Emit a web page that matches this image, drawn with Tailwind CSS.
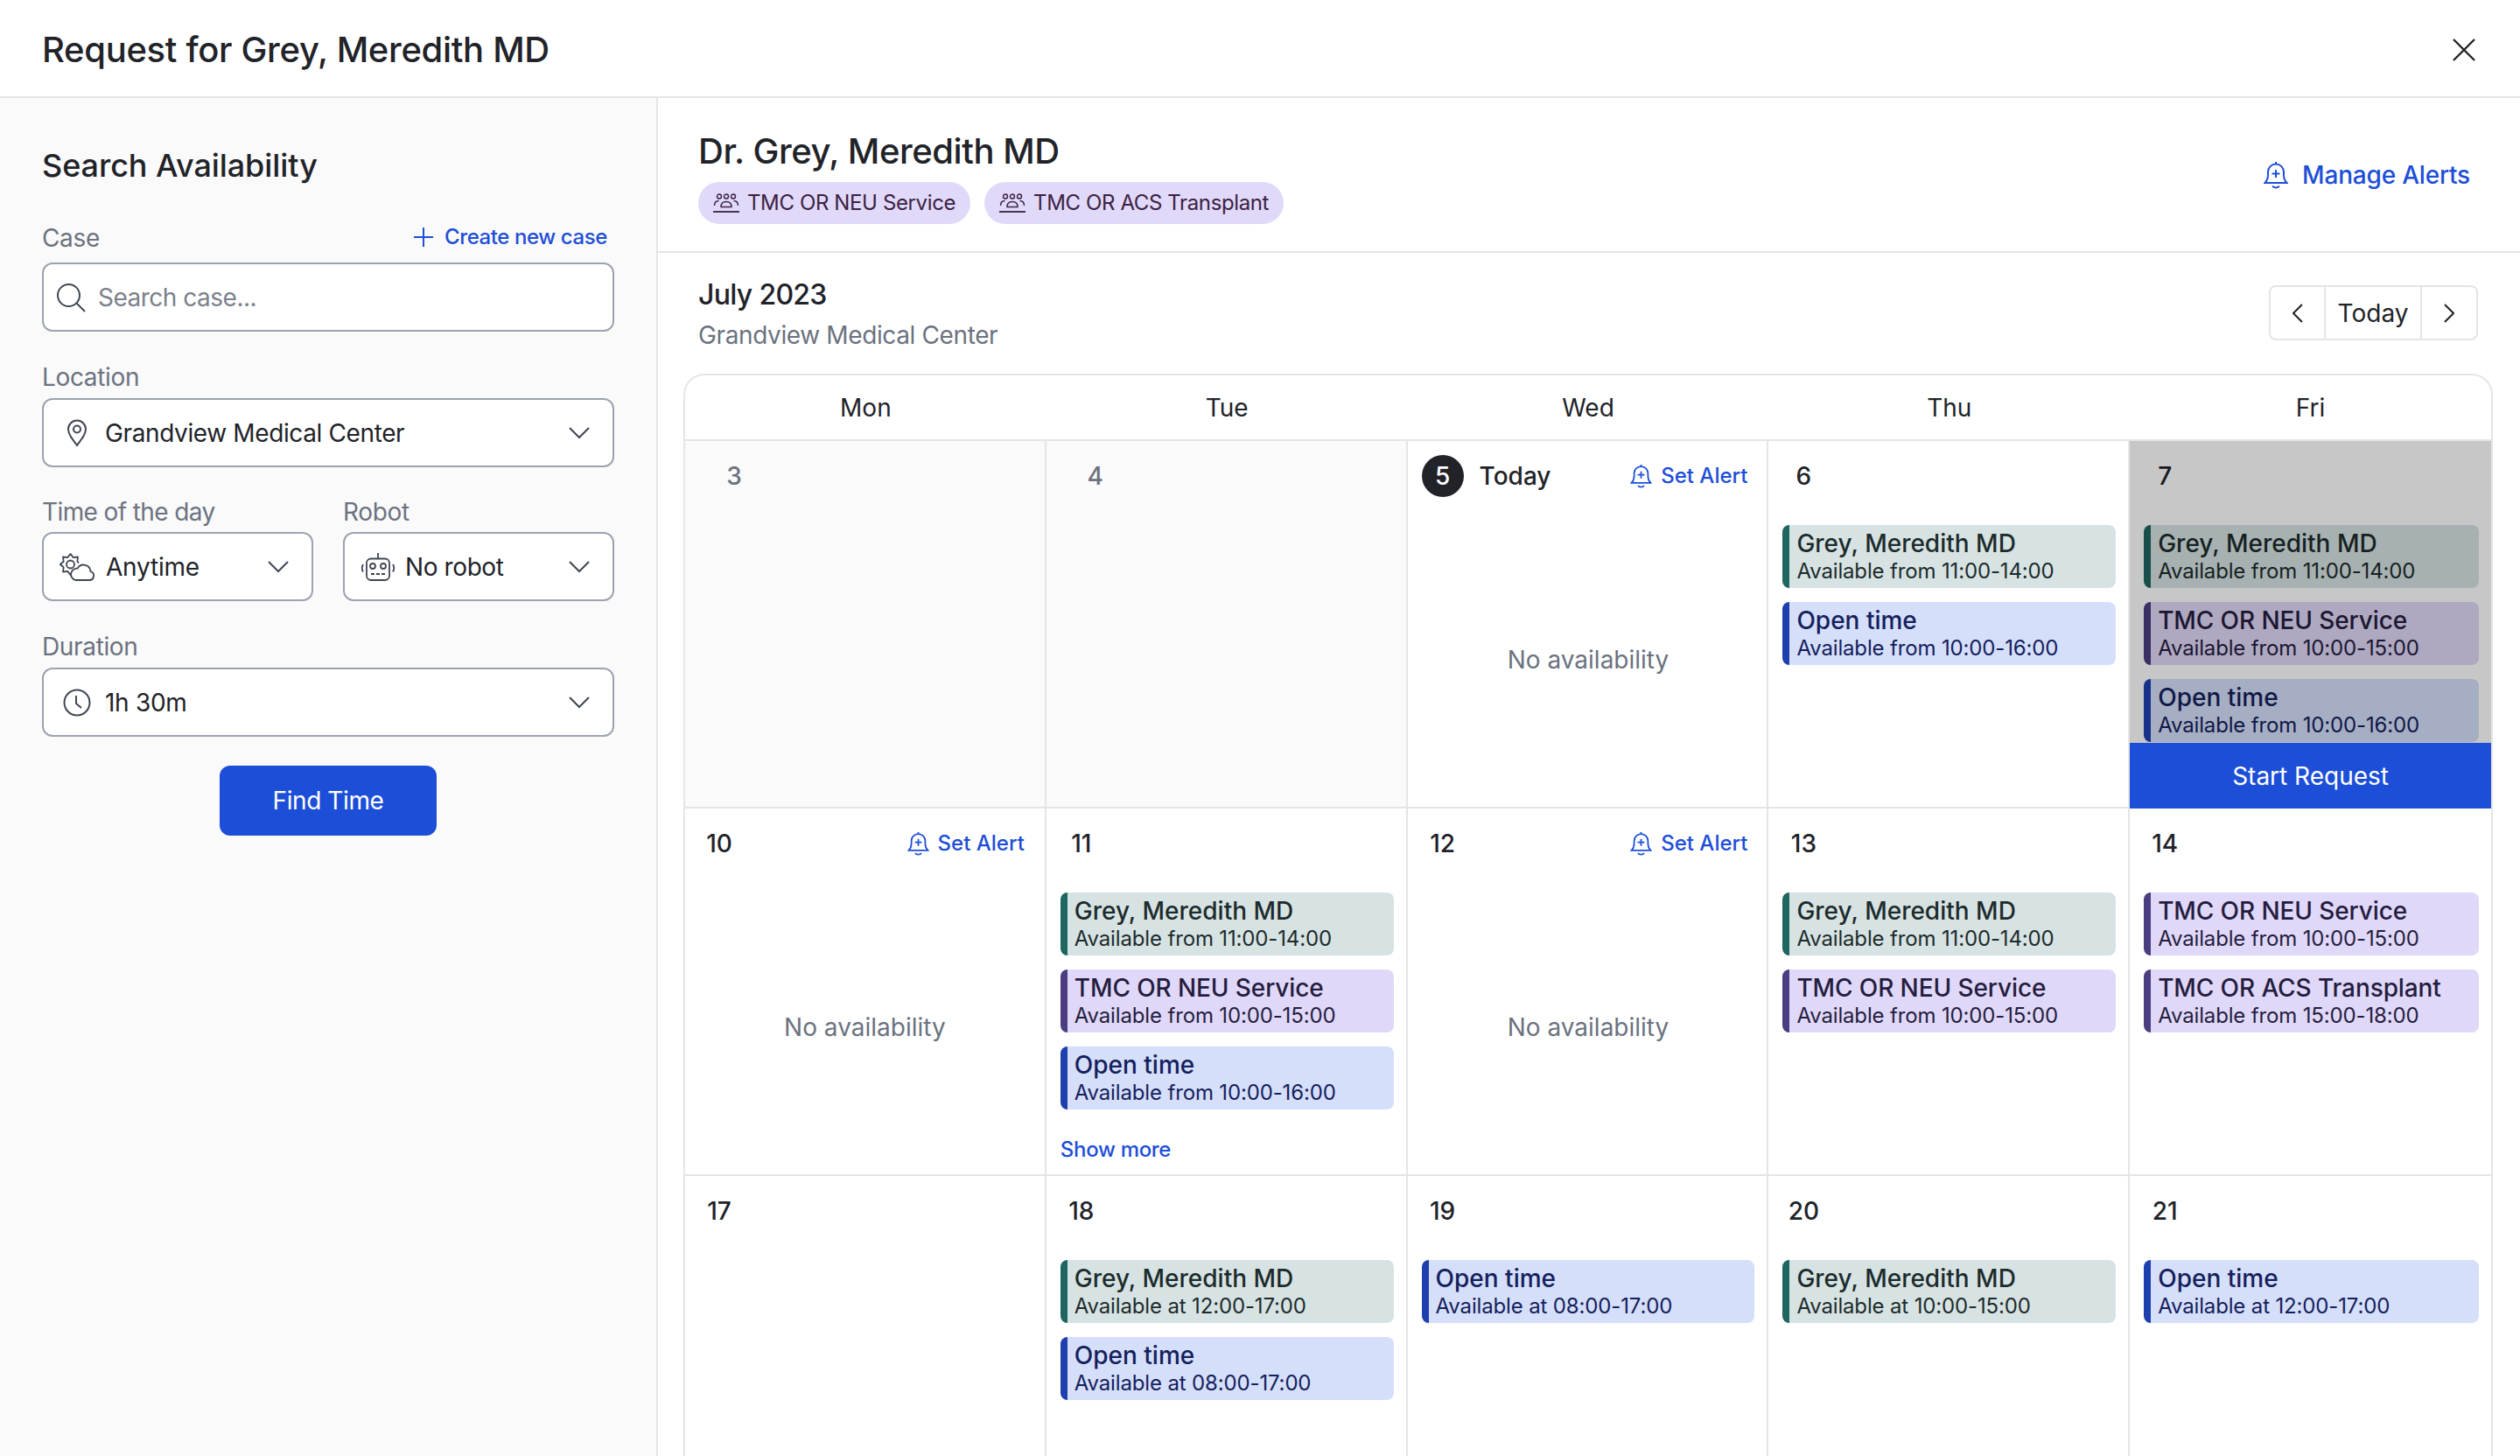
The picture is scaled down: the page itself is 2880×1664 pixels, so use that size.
<!DOCTYPE html>
<html lang="en">
<head>
    <meta charset="UTF-8">
    <title>Request for Grey, Meredith MD</title>
    <script src="https://cdn.jsdelivr.net/npm/@tailwindcss/browser@4"></script>
</head>
<body class="w-[2880px] h-[1664px] overflow-hidden bg-white text-[#212329] font-['Inter',sans-serif]">
    <header class="h-[112px] pt-[3px] border-b-2 border-[#e5e5e5] flex items-center justify-between pl-12 pr-[50px]">
        <h1 class="text-[40px] leading-[50px] font-[550] tracking-[-0.32px]">Request for Grey, Meredith MD</h1>
        <svg class="w-[28px] h-[28px] text-[#212329]" viewBox="0 0 28 28" fill="none" stroke="currentColor" stroke-width="2.4"><path d="M2 2l24 24M26 2L2 26"/></svg>
    </header>
    <div class="flex h-[1552px]">
        <!-- search form -->
        <aside class="w-[752px] shrink-0 bg-[#fafafa] border-r-2 border-[#e5e5e5] pl-12 pr-12 pt-[55px]">
            <h2 class="text-[36px] leading-[44px] font-[550] tracking-[-0.07px]">Search Availability</h2>
            <div class="flex items-center justify-between mt-[43px] mb-[10px] h-9 pr-2">
                <label class="text-[28px] text-[#6b7280] tracking-[-0.35px]">Case</label>
                <a class="flex items-center gap-[12px] mb-[3px] text-[24px] font-medium text-[#1d4ed8] tracking-[-0.4px]">
                    <svg class="w-[24px] h-[24px]" viewBox="0 0 24 24" fill="none" stroke="currentColor" stroke-width="2"><path d="M12 1v22M1 12h22"/></svg>
                    Create new case
                </a>
            </div>
            <div class="h-[79px] rounded-xl border-2 border-[#9ca3af] bg-white flex items-center pl-[14px] text-[28px] text-[#7b818c] tracking-[-0.5px]">
                <svg class="w-[34px] h-[34px] mr-[14px] text-[#3f4654]" viewBox="0 0 34 34" fill="none" stroke="currentColor" stroke-width="2"><circle cx="14.5" cy="14.5" r="12.5"/><path d="M23.5 23.5L33 33"/></svg>
                Search case...
            </div>

            <label class="block text-[28px] text-[#6b7280] tracking-[-0.35px] h-9 mt-[31px] mb-[9px]">Location</label>
            <div class="h-[79px] rounded-xl border-2 border-[#9ca3af] bg-white flex items-center pl-[26px] pr-[26px] text-[28px] tracking-[-0.38px]">
                <svg class="w-[24px] h-[32px] mr-[20px] text-[#3f4654]" viewBox="0 0 24 32" fill="none" stroke="currentColor" stroke-width="2"><path d="M12 30C6 22 2 17 2 11.500a10 10 0 0 1 20 0C22 17 18 22 12 30z"/><circle cx="12" cy="11.500" r="4"/></svg>
                <span class="flex-1">Grandview Medical Center</span>
                <svg class="w-[24px] h-[14px] text-[#3f4654]" viewBox="0 0 24 14" fill="none" stroke="currentColor" stroke-width="2"><path d="M1 1l11 11L23 1"/></svg>
            </div>

            <div class="grid grid-cols-2 gap-x-[34px] mt-[30px]">
                <div>
                    <label class="block text-[28px] text-[#6b7280] tracking-[-0.6px] h-9 mb-[8px]">Time of the day</label>
                    <div class="h-[79px] rounded-xl border-2 border-[#9ca3af] bg-white flex items-center pl-[18px] pr-[26px] text-[28px] tracking-[-0.2px]">
                        <svg class="w-[40px] h-[32px] mr-[13px] text-[#3f4654]" viewBox="0 0 40 32" fill="none" stroke="currentColor" stroke-width="1.800" stroke-linejoin="round"><path d="M15 21l-2.500 4-3.250-4.150L4 21.500l.65-5.250L.8 13l3.850-3.250L4 4.500l5.250.65L12.500 1l3.250 4.150L21 4.500l-.65 5.250L22 11.500"/><circle cx="12.500" cy="13" r="4.500"/><path fill="white" d="M18 31h16a5 5 0 0 0 1.500-9.800a8 8 0 0 0-15-3.500a6.800 6.800 0 0 0-2.500 13.300z"/></svg>
                        <span class="flex-1">Anytime</span>
                        <svg class="w-[24px] h-[14px] text-[#3f4654]" viewBox="0 0 24 14" fill="none" stroke="currentColor" stroke-width="2"><path d="M1 1l11 11L23 1"/></svg>
                    </div>
                </div>
                <div>
                    <label class="block text-[28px] text-[#6b7280] tracking-[-0.35px] h-9 mb-[8px]">Robot</label>
                    <div class="h-[79px] rounded-xl border-2 border-[#9ca3af] bg-white flex items-center pl-[18px] pr-[26px] text-[28px] tracking-[-0.4px]">
                        <svg class="w-[40px] h-[32px] mr-[11px] text-[#3f4654]" viewBox="0 0 40 32" fill="none" stroke="currentColor" stroke-width="1.800"><path d="M20 0v6"/><rect x="7" y="6.500" width="26" height="24.500" rx="5"/><circle cx="14" cy="15" r="3"/><circle cx="26" cy="15" r="3"/><path d="M12 24h4M18 24h4M24 24h4" stroke-width="2"/><path d="M3 13c-1.500 2.500-1.500 6 0 8.500M37 13c1.500 2.500 1.500 6 0 8.500"/></svg>
                        <span class="flex-1">No robot</span>
                        <svg class="w-[24px] h-[14px] text-[#3f4654]" viewBox="0 0 24 14" fill="none" stroke="currentColor" stroke-width="2"><path d="M1 1l11 11L23 1"/></svg>
                    </div>
                </div>
            </div>

            <label class="block text-[28px] text-[#6b7280] tracking-[-0.35px] h-9 mt-[31px] mb-[9px]">Duration</label>
            <div class="h-[79px] rounded-xl border-2 border-[#9ca3af] bg-white flex items-center pl-[22px] pr-[26px] text-[28px] tracking-[-0.3px]">
                <svg class="w-[32px] h-[32px] mr-[16px] text-[#3f4654]" viewBox="0 0 32 32" fill="none" stroke="currentColor" stroke-width="2"><circle cx="16" cy="16" r="14.500"/><path d="M15 8v9l6 5"/></svg>
                <span class="flex-1">1h 30m</span>
                <svg class="w-[24px] h-[14px] text-[#3f4654]" viewBox="0 0 24 14" fill="none" stroke="currentColor" stroke-width="2"><path d="M1 1l11 11L23 1"/></svg>
            </div>

            <div class="flex justify-center mt-[33px]">
                <button class="w-[248px] h-[80px] rounded-xl bg-[#1d4ed8] text-white text-[28px] tracking-[-0.4px]">Find Time</button>
            </div>
        </aside>

        <main class="flex-1 min-w-0 overflow-hidden">
            <div class="h-[177px] border-b-2 border-[#e5e5e5] flex items-start justify-between pl-[46px] pr-[57px]">
                <div class="pt-[36px]">
                    <h2 class="text-[40px] leading-[50px] font-[550] tracking-[-0.44px]">Dr. Grey, Meredith MD</h2>
                    <div class="flex gap-[16px] mt-[10px]">
                        <span class="h-[48px] rounded-full bg-[#e0d9f9] text-[#3b2142] text-[24px] tracking-[-0.38px] flex items-center pl-[17px] pr-[17px] gap-[9px]">
                            <svg class="w-[30px] h-[22px]" viewBox="0 0 30 22" fill="none" stroke="currentColor" stroke-width="1.400"><circle cx="7" cy="3.500" r="2.500"/><circle cx="15" cy="3.500" r="2.500"/><circle cx="23" cy="3.500" r="2.500"/><path d="M1.500 14c0-4 2-5.500 5-5.500M28.500 14c0-4-2-5.500-5-5.500"/><path d="M9 15.500c0-4 2-6 6-6s6 2 6 6z"/><path d="M0 21h30" stroke-width="1.800"/></svg>
                            TMC OR NEU Service
                        </span>
                        <span class="h-[48px] rounded-full bg-[#e0d9f9] text-[#3b2142] text-[24px] tracking-[-0.38px] flex items-center pl-[17px] pr-[17px] gap-[9px]">
                            <svg class="w-[30px] h-[22px]" viewBox="0 0 30 22" fill="none" stroke="currentColor" stroke-width="1.400"><circle cx="7" cy="3.500" r="2.500"/><circle cx="15" cy="3.500" r="2.500"/><circle cx="23" cy="3.500" r="2.500"/><path d="M1.500 14c0-4 2-5.500 5-5.500M28.500 14c0-4-2-5.500-5-5.500"/><path d="M9 15.500c0-4 2-6 6-6s6 2 6 6z"/><path d="M0 21h30" stroke-width="1.800"/></svg>
                            TMC OR ACS Transplant
                        </span>
                    </div>
                </div>
                <a class="flex items-center gap-[16px] mt-[70px] text-[28px] leading-9 font-medium text-[#1d4ed8] tracking-[-0.2px]">
                    <svg class="w-[28px] h-[32px]" viewBox="0 0 28 32" fill="none" stroke="currentColor" stroke-width="2"><path d="M14 1v2.500M1.500 25c2.500-2.500 3.500-5 3.500-9v-3.500a9 9 0 0 1 18 0V16c0 4 1 6.500 3.500 9z"/><path d="M10 28.500c1.500 2.500 6.500 2.500 8 0"/><path d="M14 10v9M9.500 14.500h9"/></svg>
                    Manage Alerts
                </a>
            </div>

            <div class="h-[138px] flex items-start justify-between pl-[46px] pr-[48px]">
                <div class="pt-[26px]">
                    <h3 class="text-[32px] leading-[44px] font-[550] tracking-[-0.7px]">July 2023</h3>
                    <p class="text-[28px] leading-9 text-[#6b7280] tracking-[-0.38px] mt-[6px]">Grandview Medical Center</p>
                </div>
                <div class="flex mt-[37px] h-[63px] rounded-lg border-2 border-[#e5e5e5] text-[28px]">
                    <div class="w-[63px] flex items-center justify-center border-r-2 border-[#e5e5e5]">
                        <svg class="w-[12px] h-[22px]" viewBox="0 0 12 22" fill="none" stroke="currentColor" stroke-width="2"><path d="M11 1L1 11l10 10"/></svg>
                    </div>
                    <div class="w-[110px] flex items-center justify-center border-r-2 border-[#e5e5e5]">Today</div>
                    <div class="w-[62px] flex items-center justify-center">
                        <svg class="w-[12px] h-[22px]" viewBox="0 0 12 22" fill="none" stroke="currentColor" stroke-width="2"><path d="M1 1l10 10L1 21"/></svg>
                    </div>
                </div>
            </div>

            <!-- calendar -->
            <div class="ml-[29px] w-[2068px] rounded-t-[24px] border-2 border-b-0 border-[#e5e5e5]">
                <div class="grid grid-cols-5 h-[75px] border-b-2 border-[#e5e5e5] text-[28px] text-center">
                    <div class="flex items-center justify-center">Mon</div>
                    <div class="flex items-center justify-center">Tue</div>
                    <div class="flex items-center justify-center">Wed</div>
                    <div class="flex items-center justify-center">Thu</div>
                    <div class="flex items-center justify-center">Fri</div>
                </div>

                <div class="grid grid-cols-5 auto-rows-[420px]">
                    <!-- week 1 -->
                    <div class="bg-[#fafafa] border-r-2 border-b-2 border-[#e5e5e5] pl-[32px] pt-[16px]">
                        <div class="w-12 h-12 flex items-center justify-center text-[28px] font-medium text-[#6b7280]">3</div>
                    </div>
                    <div class="bg-[#fafafa] border-r-2 border-b-2 border-[#e5e5e5] pl-[32px] pt-[16px]">
                        <div class="w-12 h-12 flex items-center justify-center text-[28px] font-medium text-[#6b7280]">4</div>
                    </div>
                    <div class="border-r-2 border-b-2 border-[#e5e5e5] flex flex-col pl-4 pr-[22px] pt-[16px]">
                        <div class="flex items-center h-12">
                            <span class="w-12 h-12 rounded-full bg-[#212329] text-white flex items-center justify-center text-[28px] font-medium">5</span>
                            <span class="ml-[18px] text-[28px] font-medium flex-1">Today</span>
                            <a class="flex items-center gap-[10px] text-[24px] font-medium text-[#1d4ed8]">
                                <svg class="w-[25px] h-[28px]" viewBox="0 0 28 32" fill="none" stroke="currentColor" stroke-width="2"><path d="M14 1v2.500M1.500 25c2.500-2.500 3.500-5 3.500-9v-3.500a9 9 0 0 1 18 0V16c0 4 1 6.500 3.500 9z"/><path d="M10 28.500c1.500 2.500 6.500 2.500 8 0"/><path d="M14 10v9M9.500 14.500h9"/></svg>
                                Set Alert
                            </a>
                        </div>
                        <p class="mt-[168px] pl-[8px] text-center text-[28px] leading-9 text-[#6b7280]">No availability</p>
                    </div>
                    <div class="border-r-2 border-b-2 border-[#e5e5e5] pl-4 pr-[14px] pt-[16px]">
                        <div class="w-12 h-12 flex items-center justify-center text-[28px] font-medium">6</div>
                        <div class="mt-[32px] flex flex-col gap-4">
                            <div class="h-[72px] rounded-lg border-l-8 border-[#1f6660] bg-[#d7e3e3] pl-[8px] text-[#1c2b2c]">
                                <p class="text-[28px] leading-[36px] font-medium pt-[3px]">Grey, Meredith MD</p>
                                <p class="text-[24px] leading-[28px] tracking-[-0.15px]">Available from 11:00-14:00</p>
                            </div>
                            <div class="h-[72px] rounded-lg border-l-8 border-[#1e40af] bg-[#d5dffa] pl-[8px] text-[#14205c]">
                                <p class="text-[28px] leading-[36px] font-medium pt-[3px]">Open time</p>
                                <p class="text-[24px] leading-[28px] tracking-[-0.15px]">Available from 10:00-16:00</p>
                            </div>
                        </div>
                    </div>
                    <div class="relative border-b-2 border-[#e5e5e5] pl-4 pr-[14px] pt-[16px]">
                        <div class="w-12 h-12 flex items-center justify-center text-[28px] font-medium">7</div>
                        <div class="mt-[32px] flex flex-col gap-4">
                            <div class="h-[72px] rounded-lg border-l-8 border-[#1f6660] bg-[#d7e3e3] pl-[8px] text-[#1c2b2c]">
                                <p class="text-[28px] leading-[36px] font-medium pt-[3px]">Grey, Meredith MD</p>
                                <p class="text-[24px] leading-[28px] tracking-[-0.15px]">Available from 11:00-14:00</p>
                            </div>
                            <div class="h-[72px] rounded-lg border-l-8 border-[#4c3d80] bg-[#e0d8f8] pl-[8px] text-[#241d3f]">
                                <p class="text-[28px] leading-[36px] font-medium pt-[3px] tracking-[-0.1px]">TMC OR NEU Service</p>
                                <p class="text-[24px] leading-[28px] tracking-[-0.15px]">Available from 10:00-15:00</p>
                            </div>
                            <div class="h-[72px] rounded-lg border-l-8 border-[#1e40af] bg-[#d5dffa] pl-[8px] text-[#14205c]">
                                <p class="text-[28px] leading-[36px] font-medium pt-[3px]">Open time</p>
                                <p class="text-[24px] leading-[28px] tracking-[-0.15px]">Available from 10:00-16:00</p>
                            </div>
                        </div>
                        <div class="absolute inset-0 bottom-[-2px] bg-black/[0.22]"></div>
                        <button class="absolute left-0 right-0 bottom-[-2px] h-[75px] bg-[#1d4ed8] text-white text-[28px]">Start Request</button>
                    </div>

                    <!-- week 2 -->
                    <div class="border-r-2 border-b-2 border-[#e5e5e5] flex flex-col pl-[15px] pr-[23px] pt-[16px]">
                        <div class="flex items-center justify-between h-12">
                            <span class="w-12 h-12 flex items-center justify-center text-[28px] font-medium">10</span>
                            <a class="flex items-center gap-[10px] text-[24px] font-medium text-[#1d4ed8]">
                                <svg class="w-[25px] h-[28px]" viewBox="0 0 28 32" fill="none" stroke="currentColor" stroke-width="2"><path d="M14 1v2.500M1.500 25c2.500-2.500 3.500-5 3.500-9v-3.500a9 9 0 0 1 18 0V16c0 4 1 6.500 3.500 9z"/><path d="M10 28.500c1.500 2.500 6.500 2.500 8 0"/><path d="M14 10v9M9.500 14.500h9"/></svg>
                                Set Alert
                            </a>
                        </div>
                        <p class="mt-[168px] pl-[8px] text-center text-[28px] leading-9 text-[#6b7280]">No availability</p>
                    </div>
                    <div class="border-r-2 border-b-2 border-[#e5e5e5] pl-4 pr-[14px] pt-[16px]">
                        <div class="w-12 h-12 flex items-center justify-center text-[28px] font-medium">11</div>
                        <div class="mt-[32px] flex flex-col gap-4">
                            <div class="h-[72px] rounded-lg border-l-8 border-[#1f6660] bg-[#d7e3e3] pl-[8px] text-[#1c2b2c]">
                                <p class="text-[28px] leading-[36px] font-medium pt-[3px]">Grey, Meredith MD</p>
                                <p class="text-[24px] leading-[28px] tracking-[-0.15px]">Available from 11:00-14:00</p>
                            </div>
                            <div class="h-[72px] rounded-lg border-l-8 border-[#4c3d80] bg-[#e0d8f8] pl-[8px] text-[#241d3f]">
                                <p class="text-[28px] leading-[36px] font-medium pt-[3px] tracking-[-0.1px]">TMC OR NEU Service</p>
                                <p class="text-[24px] leading-[28px] tracking-[-0.15px]">Available from 10:00-15:00</p>
                            </div>
                            <div class="h-[72px] rounded-lg border-l-8 border-[#1e40af] bg-[#d5dffa] pl-[8px] text-[#14205c]">
                                <p class="text-[28px] leading-[36px] font-medium pt-[3px]">Open time</p>
                                <p class="text-[24px] leading-[28px] tracking-[-0.15px]">Available from 10:00-16:00</p>
                            </div>
                        </div>
                        <a class="block mt-[30px] text-[24px] leading-[32px] font-medium text-[#1d4ed8] tracking-[-0.3px]">Show more</a>
                    </div>
                    <div class="border-r-2 border-b-2 border-[#e5e5e5] flex flex-col pl-4 pr-[22px] pt-[16px]">
                        <div class="flex items-center justify-between h-12">
                            <span class="w-12 h-12 flex items-center justify-center text-[28px] font-medium">12</span>
                            <a class="flex items-center gap-[10px] text-[24px] font-medium text-[#1d4ed8]">
                                <svg class="w-[25px] h-[28px]" viewBox="0 0 28 32" fill="none" stroke="currentColor" stroke-width="2"><path d="M14 1v2.500M1.500 25c2.500-2.500 3.500-5 3.500-9v-3.500a9 9 0 0 1 18 0V16c0 4 1 6.500 3.500 9z"/><path d="M10 28.500c1.500 2.500 6.500 2.500 8 0"/><path d="M14 10v9M9.500 14.500h9"/></svg>
                                Set Alert
                            </a>
                        </div>
                        <p class="mt-[168px] pl-[8px] text-center text-[28px] leading-9 text-[#6b7280]">No availability</p>
                    </div>
                    <div class="border-r-2 border-b-2 border-[#e5e5e5] pl-4 pr-[14px] pt-[16px]">
                        <div class="w-12 h-12 flex items-center justify-center text-[28px] font-medium">13</div>
                        <div class="mt-[32px] flex flex-col gap-4">
                            <div class="h-[72px] rounded-lg border-l-8 border-[#1f6660] bg-[#d7e3e3] pl-[8px] text-[#1c2b2c]">
                                <p class="text-[28px] leading-[36px] font-medium pt-[3px]">Grey, Meredith MD</p>
                                <p class="text-[24px] leading-[28px] tracking-[-0.15px]">Available from 11:00-14:00</p>
                            </div>
                            <div class="h-[72px] rounded-lg border-l-8 border-[#4c3d80] bg-[#e0d8f8] pl-[8px] text-[#241d3f]">
                                <p class="text-[28px] leading-[36px] font-medium pt-[3px] tracking-[-0.1px]">TMC OR NEU Service</p>
                                <p class="text-[24px] leading-[28px] tracking-[-0.15px]">Available from 10:00-15:00</p>
                            </div>
                        </div>
                    </div>
                    <div class="border-b-2 border-[#e5e5e5] pl-4 pr-[14px] pt-[16px]">
                        <div class="w-12 h-12 flex items-center justify-center text-[28px] font-medium">14</div>
                        <div class="mt-[32px] flex flex-col gap-4">
                            <div class="h-[72px] rounded-lg border-l-8 border-[#4c3d80] bg-[#e0d8f8] pl-[8px] text-[#241d3f]">
                                <p class="text-[28px] leading-[36px] font-medium pt-[3px] tracking-[-0.1px]">TMC OR NEU Service</p>
                                <p class="text-[24px] leading-[28px] tracking-[-0.15px]">Available from 10:00-15:00</p>
                            </div>
                            <div class="h-[72px] rounded-lg border-l-8 border-[#4c3d80] bg-[#e0d8f8] pl-[8px] text-[#241d3f]">
                                <p class="text-[28px] leading-[36px] font-medium pt-[3px] tracking-[-0.1px]">TMC OR ACS Transplant</p>
                                <p class="text-[24px] leading-[28px] tracking-[-0.15px]">Available from 15:00-18:00</p>
                            </div>
                        </div>
                    </div>

                    <!-- week 3 -->
                    <div class="border-r-2 border-[#e5e5e5] pl-[15px] pr-[14px] pt-[16px]">
                        <div class="w-12 h-12 flex items-center justify-center text-[28px] font-medium">17</div>
                    </div>
                    <div class="border-r-2 border-[#e5e5e5] pl-4 pr-[14px] pt-[16px]">
                        <div class="w-12 h-12 flex items-center justify-center text-[28px] font-medium">18</div>
                        <div class="mt-[32px] flex flex-col gap-4">
                            <div class="h-[72px] rounded-lg border-l-8 border-[#1f6660] bg-[#d7e3e3] pl-[8px] text-[#1c2b2c]">
                                <p class="text-[28px] leading-[36px] font-medium pt-[3px]">Grey, Meredith MD</p>
                                <p class="text-[24px] leading-[28px] tracking-[-0.15px]">Available at 12:00-17:00</p>
                            </div>
                            <div class="h-[72px] rounded-lg border-l-8 border-[#1e40af] bg-[#d5dffa] pl-[8px] text-[#14205c]">
                                <p class="text-[28px] leading-[36px] font-medium pt-[3px]">Open time</p>
                                <p class="text-[24px] leading-[28px] tracking-[-0.15px]">Available at 08:00-17:00</p>
                            </div>
                        </div>
                    </div>
                    <div class="border-r-2 border-[#e5e5e5] pl-4 pr-[14px] pt-[16px]">
                        <div class="w-12 h-12 flex items-center justify-center text-[28px] font-medium">19</div>
                        <div class="mt-[32px] flex flex-col gap-4">
                            <div class="h-[72px] rounded-lg border-l-8 border-[#1e40af] bg-[#d5dffa] pl-[8px] text-[#14205c]">
                                <p class="text-[28px] leading-[36px] font-medium pt-[3px]">Open time</p>
                                <p class="text-[24px] leading-[28px] tracking-[-0.15px]">Available at 08:00-17:00</p>
                            </div>
                        </div>
                    </div>
                    <div class="border-r-2 border-[#e5e5e5] pl-4 pr-[14px] pt-[16px]">
                        <div class="w-12 h-12 flex items-center justify-center text-[28px] font-medium">20</div>
                        <div class="mt-[32px] flex flex-col gap-4">
                            <div class="h-[72px] rounded-lg border-l-8 border-[#1f6660] bg-[#d7e3e3] pl-[8px] text-[#1c2b2c]">
                                <p class="text-[28px] leading-[36px] font-medium pt-[3px]">Grey, Meredith MD</p>
                                <p class="text-[24px] leading-[28px] tracking-[-0.15px]">Available at 10:00-15:00</p>
                            </div>
                        </div>
                    </div>
                    <div class="pl-4 pr-[14px] pt-[16px]">
                        <div class="w-12 h-12 flex items-center justify-center text-[28px] font-medium">21</div>
                        <div class="mt-[32px] flex flex-col gap-4">
                            <div class="h-[72px] rounded-lg border-l-8 border-[#1e40af] bg-[#d5dffa] pl-[8px] text-[#14205c]">
                                <p class="text-[28px] leading-[36px] font-medium pt-[3px]">Open time</p>
                                <p class="text-[24px] leading-[28px] tracking-[-0.15px]">Available at 12:00-17:00</p>
                            </div>
                        </div>
                    </div>
                </div>
            </div>
        </main>
    </div>
</body>
</html>
